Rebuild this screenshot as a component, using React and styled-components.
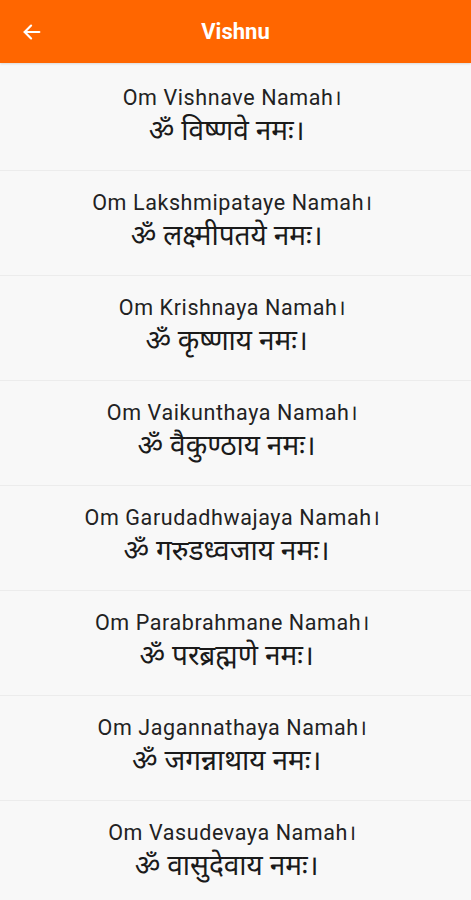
import React from "react";
import styled, { createGlobalStyle } from "styled-components";

const mantras = [
  { en: "Om Vishnave Namah।", hi: "ॐ विष्णवे नमः।" },
  { en: "Om Lakshmipataye Namah।", hi: "ॐ लक्ष्मीपतये नमः।" },
  { en: "Om Krishnaya Namah।", hi: "ॐ कृष्णाय नमः।" },
  { en: "Om Vaikunthaya Namah।", hi: "ॐ वैकुण्ठाय नमः।" },
  { en: "Om Garudadhwajaya Namah।", hi: "ॐ गरुडध्वजाय नमः।" },
  { en: "Om Parabrahmane Namah।", hi: "ॐ परब्रह्मणे नमः।" },
  { en: "Om Jagannathaya Namah।", hi: "ॐ जगन्नाथाय नमः।" },
  { en: "Om Vasudevaya Namah।", hi: "ॐ वासुदेवाय नमः।" },
];

const GlobalStyle = createGlobalStyle`
  body {
    margin: 0;
    background: #f8f8f8;
    font-family: Roboto, "Noto Sans", sans-serif;
  }
`;

const App = () => {
  return (
    <>
      <GlobalStyle />
      <Page>
        <Header>
          <BackButton aria-label="back">
            <svg width="22" height="22" viewBox="0 0 24 24" fill="none" stroke="#fff" strokeWidth="2.4" strokeLinecap="round" strokeLinejoin="round">
              <path d="M20 12H4" />
              <path d="M11 5l-7 7 7 7" />
            </svg>
          </BackButton>
          <Title>Vishnu</Title>
        </Header>
        <List>
          {mantras.map((m) => (
            <Item key={m.en}>
              <English>{m.en}</English>
              <Hindi>{m.hi}</Hindi>
            </Item>
          ))}
        </List>
      </Page>
    </>
  );
};

const Page = styled.div`
  width: 471px;
  height: 900px;
  overflow: hidden;
  background: #f8f8f8;
`;

const Header = styled.header`
  position: relative;
  display: flex;
  align-items: center;
  justify-content: center;
  height: 63px;
  background-color: #ff6600;
  box-shadow: 0 1px 2px rgba(0, 0, 0, 0.12);
`;

const BackButton = styled.button`
  position: absolute;
  left: 21px;
  top: 21px;
  display: flex;
  padding: 0;
  border: 0;
  background: none;
`;

const Title = styled.h1`
  margin: 0;
  font-weight: 700;
  font-size: 22px;
  color: #fff;
`;

const List = styled.ul`
  list-style: none;
  margin: 0;
  padding: 3px 0 0;
`;

const Item = styled.li`
  display: flex;
  flex-direction: column;
  align-items: center;
  justify-content: center;
  box-sizing: border-box;
  height: 105px;
  padding: 0 6px 4px 0;
  border-bottom: 1px solid #ececec;
`;

const English = styled.span`
  font-size: 21.5px;
  line-height: 30px;
  letter-spacing: 0.6px;
  color: #222;
`;

const Hindi = styled.span`
  padding-right: 12px;
  font-size: 28px;
  line-height: 36px;
  color: #1a1a1a;
`;

export default App;
